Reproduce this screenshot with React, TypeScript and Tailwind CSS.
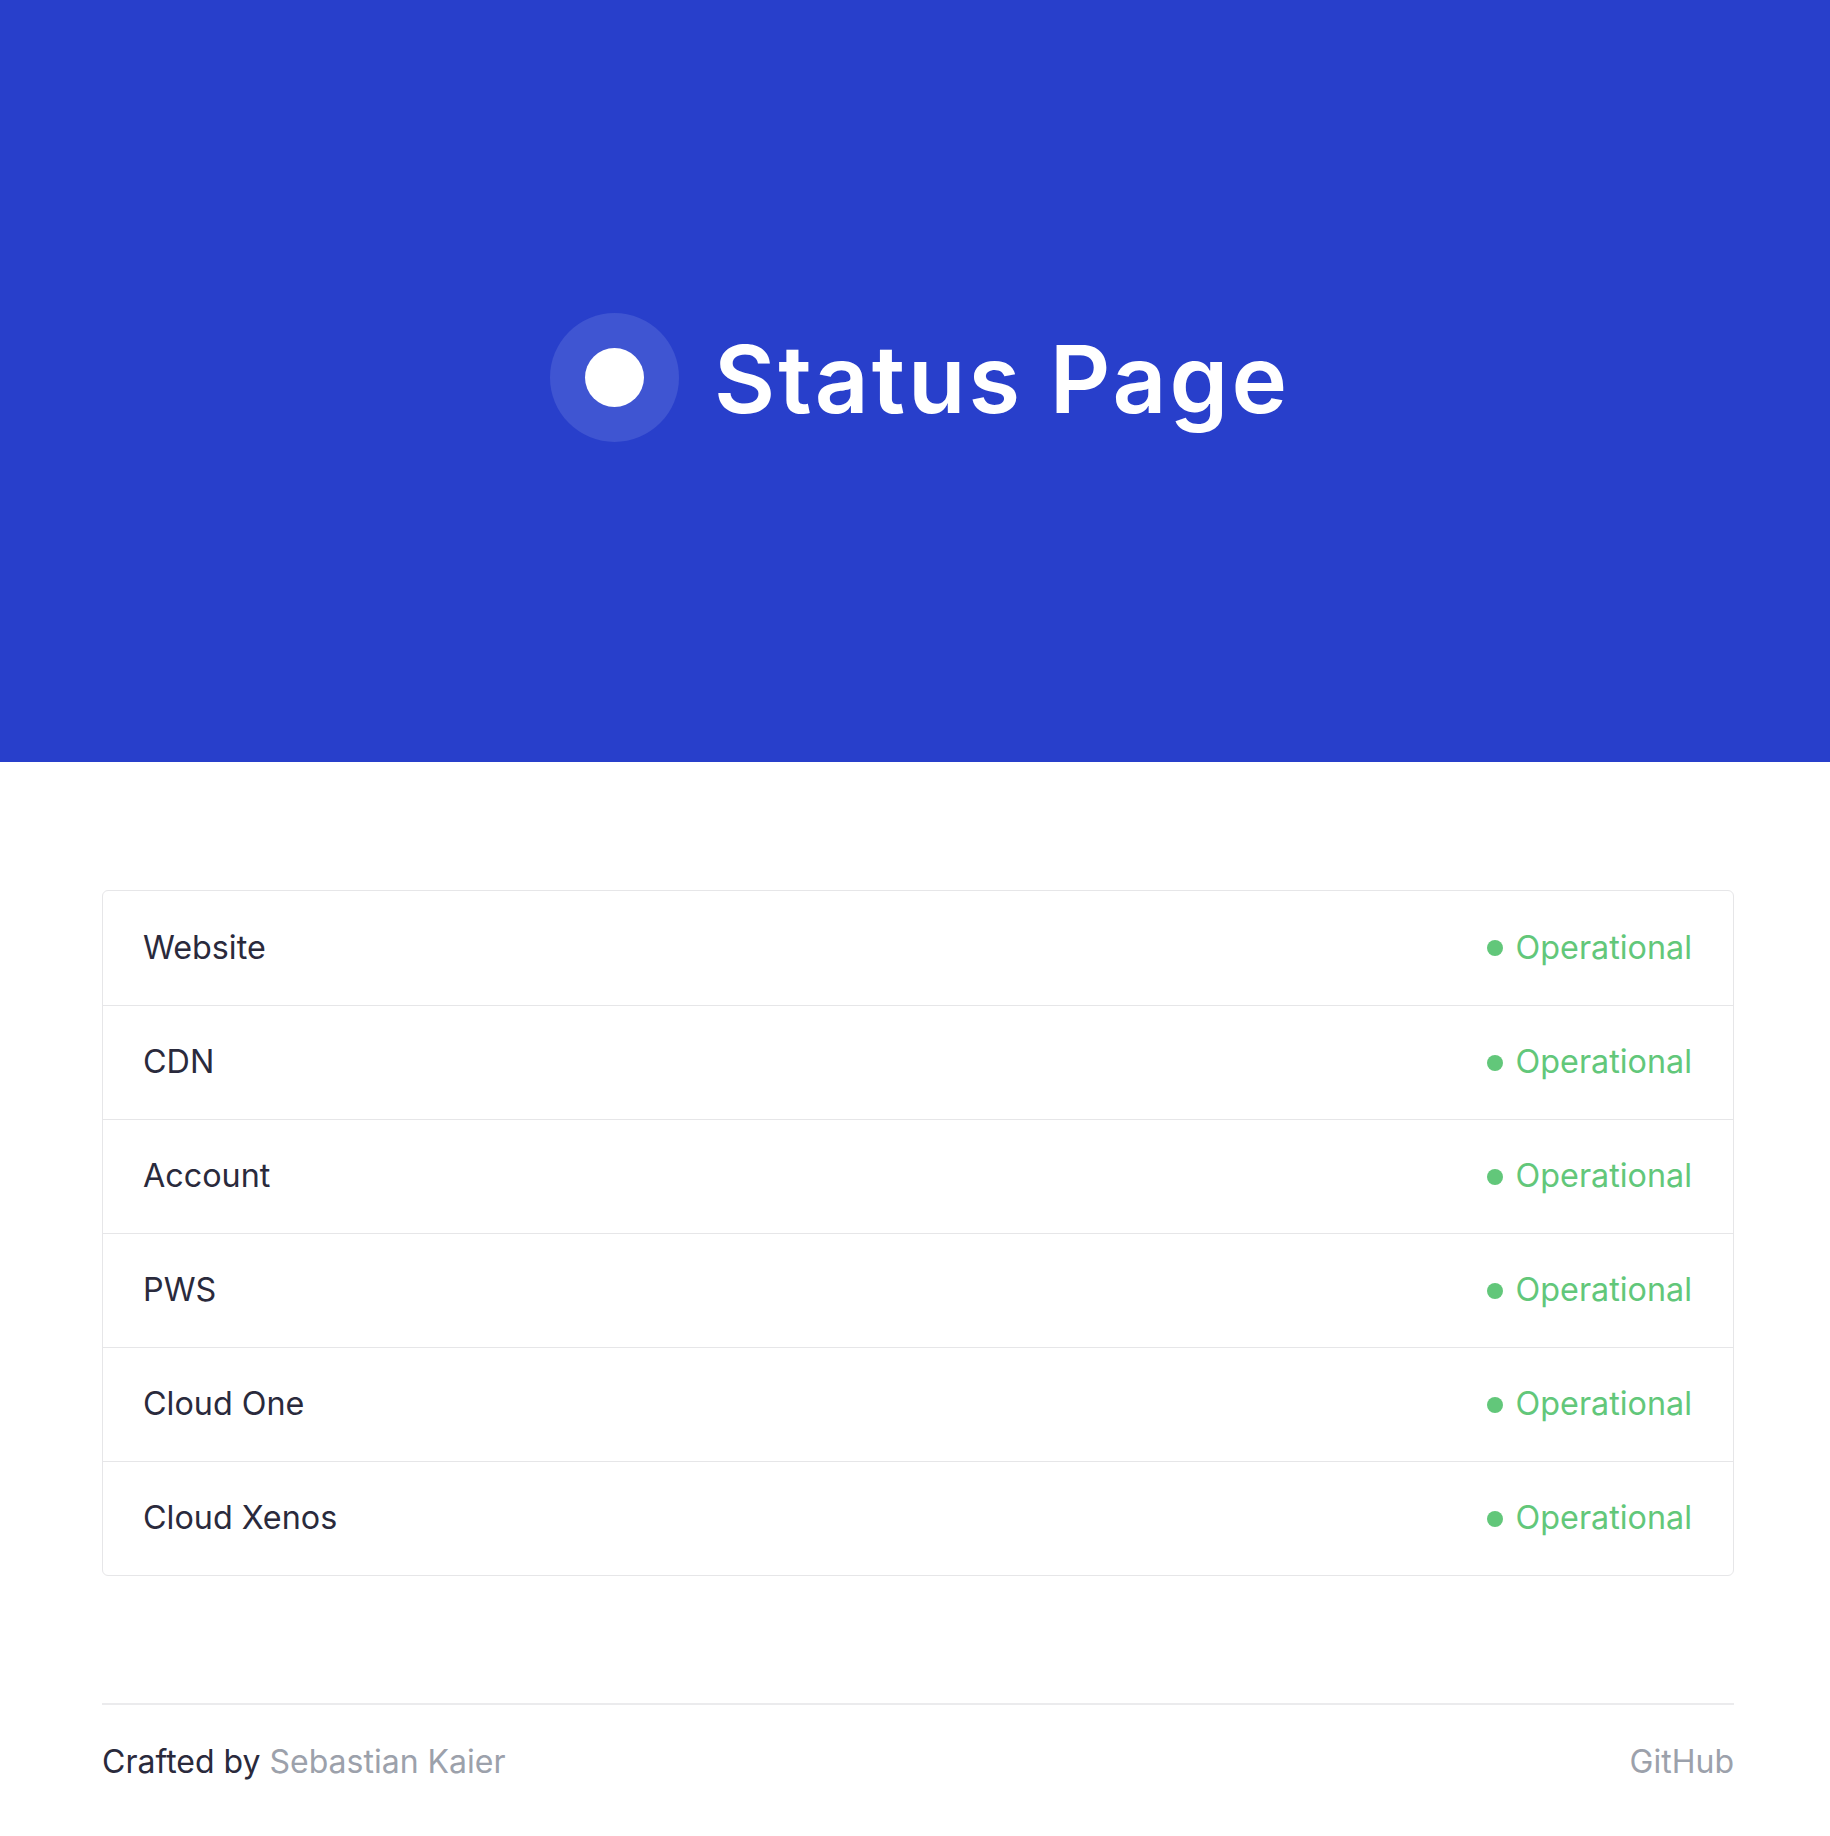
import React from "react";

const services = ["Website", "CDN", "Account", "PWS", "Cloud One", "Cloud Xenos"];

export default function App() {
  return (
    <div className="min-h-[1836px] bg-white" style={{ fontFamily: "Inter, 'Noto Sans', sans-serif" }}>
      <header className="h-[762px] bg-[#283fcb] flex items-center justify-center">
        <div className="flex items-center gap-[35px] -mt-[8px] ml-[10px]">
          <div className="w-[129px] h-[129px] rounded-full bg-[#3f55d2] flex items-center justify-center">
            <div className="w-[59px] h-[59px] rounded-full bg-white" />
          </div>
          <h1 className="text-white text-[94px] font-semibold tracking-[3px] leading-none mt-[4px]" style={{ fontFamily: "Inter, sans-serif" }}>
            Status Page
          </h1>
        </div>
      </header>
      <main className="w-[1632px] ml-[102px] mt-[128px]">
        <div className="border border-[#e6e6e8] rounded-[6px]">
          {services.map((s, i) => (
            <div
              key={s}
              className={`h-[114px] flex items-center justify-between pl-[40px] pr-[41px] ${i > 0 ? "border-t border-[#e6e6e8]" : ""}`}
            >
              <span className="text-[#2a2a3c] text-[32.3px]">{s}</span>
              <span className="flex items-center gap-[13px] text-[#62c77a] text-[32.3px]">
                <span className="w-[16px] h-[16px] rounded-full bg-[#62c77a]" />
                Operational
              </span>
            </div>
          ))}
        </div>
        <footer className="mt-[127px] border-t-2 border-[#ebebed] pt-[33px] flex justify-between text-[32px]">
          <div className="text-[#2a2a3c]">
            Crafted by <span className="text-[#9ca1ab]">Sebastian Kaier</span>
          </div>
          <div className="text-[#9ca1ab]">GitHub</div>
        </footer>
      </main>
    </div>
  );
}
